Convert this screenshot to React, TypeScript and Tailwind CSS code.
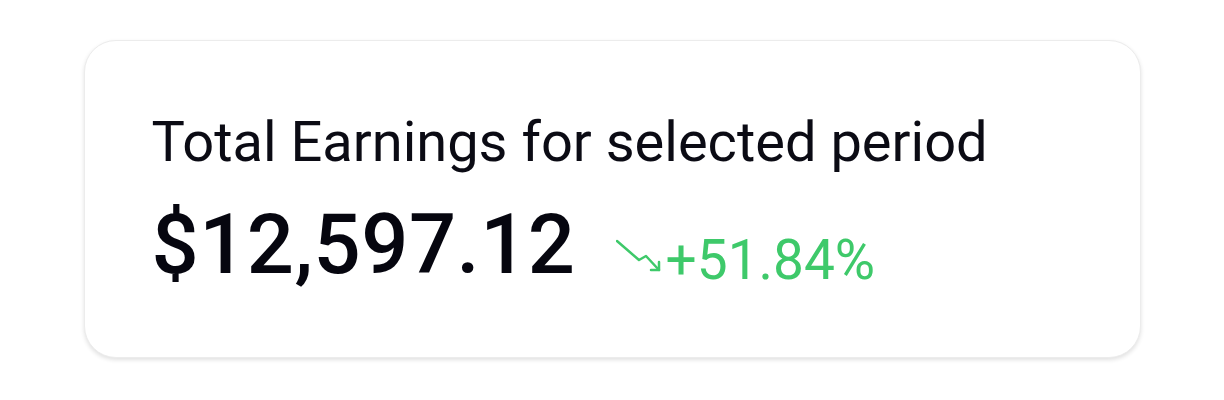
import React from "react";

const TrendArrow = () => (
  <svg width="46" height="36" viewBox="0 0 46 36" fill="none" xmlns="http://www.w3.org/2000/svg" className="mb-[9px]">
    <polyline
      points="1,3 23,22 30,18 43,32"
      stroke="#3ec96a"
      strokeWidth="2.5"
      strokeLinecap="round"
      strokeLinejoin="round"
    />
    <polyline
      points="35,32 43,32 43,24"
      stroke="#3ec96a"
      strokeWidth="2.5"
      strokeLinecap="round"
      strokeLinejoin="round"
    />
  </svg>
);

export default function App() {
  return (
    <div className="w-full h-[400px] bg-white pt-[40px] font-['Roboto',sans-serif]">
      {/* earnings card */}
      <div className="mx-auto w-[1057px] h-[318px] rounded-[32px] bg-white border border-[#ececec] shadow-[0_2px_4px_rgba(0,0,0,0.12)] pl-[67px] pt-[67px]">
        <p className="text-[56px] leading-[68px] text-[#0b0b14]">Total Earnings for selected period</p>
        <div className="flex items-start mt-[24px]">
          <span className="text-[83px] leading-[90px] font-medium text-[#06060f] tracking-[0.5px]">$12,597.12</span>
          <div className="flex items-center ml-[40px] mt-[28px] text-[#3ec96a]">
            <TrendArrow />
            <span className="text-[55px] leading-[64px] ml-[4px]">+51.84%</span>
          </div>
        </div>
      </div>
    </div>
  );
}
